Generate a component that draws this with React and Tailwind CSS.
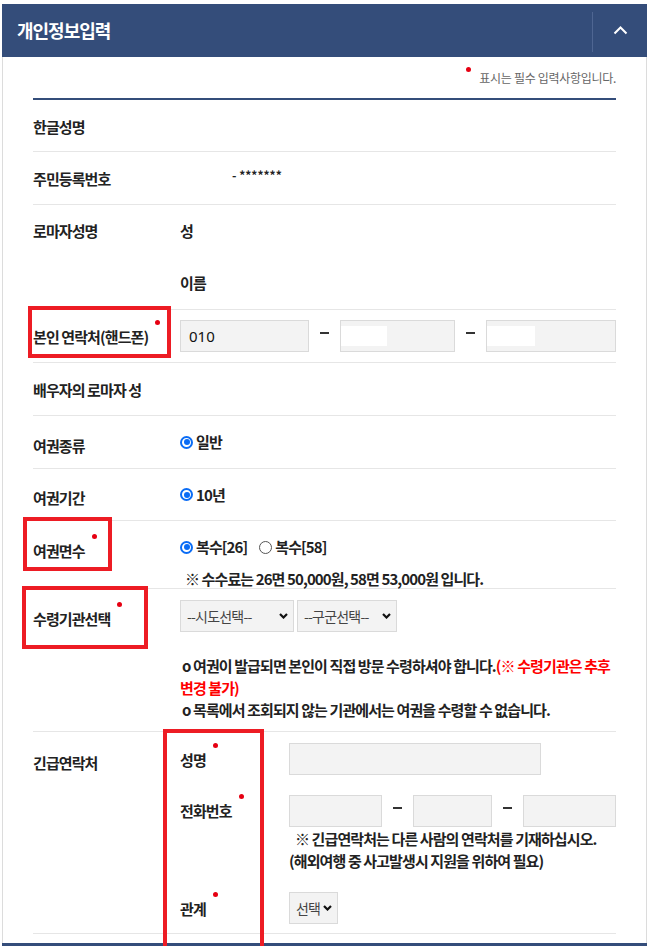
import React from 'react';

const Req = () => (
  <span className="absolute right-[-12px] top-[-7px] w-[5px] h-[5px] rounded-full bg-[#e60012]" />
);

const Label = ({ children, req }) => (
  <span className="relative inline-block text-[15px] leading-[20px] font-bold tracking-[-0.9px] text-[#222] whitespace-nowrap">
    {children}
    {req && <Req />}
  </span>
);

const Radio = ({ checked }) =>
  checked ? (
    <span className="w-[13px] h-[13px] rounded-full border-[2px] border-[#0a6cf5] bg-white flex items-center justify-center shrink-0">
      <span className="w-[6px] h-[6px] rounded-full bg-[#0a6cf5]" />
    </span>
  ) : (
    <span className="w-[13px] h-[13px] rounded-full border border-[#555] bg-white shrink-0" />
  );

const Chevron = () => (
  <svg width="9" height="6" viewBox="0 0 9 6" className="absolute right-[6px] top-[13px] pointer-events-none">
    <polyline points="1,1 4.5,4.5 8,1" fill="none" stroke="#111" strokeWidth="2.2" />
  </svg>
);

const Select = ({ className, text }) => (
  <div className={`relative h-[32px] ${className}`}>
    <select className="appearance-none w-full h-full bg-[#f3f3f3] border border-[#dadada] pl-[6px] text-[14px] tracking-[-0.8px] text-[#444] outline-none">
      <option>{text}</option>
    </select>
    <Chevron />
  </div>
);

const Input = ({ className, children }) => (
  <div className={`h-[32px] bg-[#f3f3f3] border border-[#dadada] flex items-center ${className}`}>
    {children}
  </div>
);

const Dash = () => (
  <span className="w-[31px] flex justify-center">
    <span className="w-[9px] h-[2px] bg-[#333] -translate-y-[3px]" />
  </span>
);

const Row = ({ className, children }) => (
  <div className={`flex border-b border-[#e6e6e6] ${className}`}>{children}</div>
);

export default function App() {
  return (
    <div className="relative w-[652px] h-[946px] overflow-hidden bg-white pl-[2px] pt-[4px] font-['Noto_Sans_CJK_KR','Noto_Sans',sans-serif] text-[#222]">
      {/* header */}
      <div className="w-[645px] h-[53px] bg-[#344d7a] flex items-center">
        <h2 className="flex-1 pl-[15px] text-white text-[18px] font-bold tracking-[-1px]">개인정보입력</h2>
        <div className="w-px h-[40px] bg-[#4f6692] mt-[3px]" />
        <button className="w-[54px] h-full flex items-center justify-center">
          <svg width="15" height="9" viewBox="0 0 15 9">
            <polyline points="1.5,7.5 7.5,1.5 13.5,7.5" fill="none" stroke="#fff" strokeWidth="2" />
          </svg>
        </button>
      </div>

      {/* body */}
      <div className="w-[645px] border-x border-[#dcdcdc] px-[30px] pb-[9px]">
        <div className="h-[41px] flex items-center justify-end">
          <span className="relative text-[12px] leading-[16px] tracking-[-0.3px] text-[#666]">
            <span className="absolute left-[-13px] top-[-3px] w-[5px] h-[5px] rounded-full bg-[#e60012]" />
            표시는 필수 입력사항입니다.
          </span>
        </div>
        <div className="h-[2px] bg-[#344d7a]" />

        <Row className="h-[52px] items-center">
          <div className="w-[147px] shrink-0"><Label>한글성명</Label></div>
        </Row>

        <Row className="h-[53px] items-center">
          <div className="w-[147px] shrink-0"><Label>주민등록번호</Label></div>
          <span className="ml-[52px] mb-[6px] text-[12px] font-bold text-[#222]">- *******</span>
        </Row>

        <Row className="h-[105px]">
          <div className="w-[147px] shrink-0 h-[52px] flex items-center"><Label>로마자성명</Label></div>
          <div className="flex-1 flex flex-col">
            <div className="h-[52px] flex items-center"><Label>성</Label></div>
            <div className="h-[52px] flex items-center"><Label>이름</Label></div>
          </div>
        </Row>

        <Row className="h-[53px] items-center">
          <div className="w-[147px] shrink-0"><Label req>본인 연락처(핸드폰)</Label></div>
          <div className="flex-1 flex items-center">
            <Input className="w-[129px] pl-[8px]">
              <span className="text-[15px] text-[#111] font-['Noto_Sans',sans-serif]">010</span>
            </Input>
            <Dash />
            <Input className="w-[115px]">
              <span className="w-[46px] h-[20px] bg-white" />
            </Input>
            <Dash />
            <Input className="flex-1">
              <span className="w-[48px] h-[20px] bg-white" />
            </Input>
          </div>
        </Row>

        <Row className="h-[53px] items-center">
          <div className="w-[147px] shrink-0"><Label>배우자의 로마자 성</Label></div>
        </Row>

        <Row className="h-[53px] items-center">
          <div className="w-[147px] shrink-0 pt-[5px]"><Label>여권종류</Label></div>
          <label className="flex items-center gap-[3px]">
            <Radio checked />
            <Label>일반</Label>
          </label>
        </Row>

        <Row className="h-[52px] items-center">
          <div className="w-[147px] shrink-0 pt-[5px]"><Label>여권기간</Label></div>
          <label className="flex items-center gap-[3px]">
            <Radio checked />
            <Label>10년</Label>
          </label>
        </Row>

        <Row className="h-[68px]">
          <div className="w-[147px] shrink-0 pt-[17px]"><Label req>여권면수</Label></div>
          <div className="flex-1 pt-[16px]">
            <div className="flex items-center h-[20px]">
              <label className="flex items-center gap-[3px]">
                <Radio checked />
                <Label>복수[26]</Label>
              </label>
              <label className="flex items-center gap-[3px] ml-[12px]">
                <Radio />
                <Label>복수[58]</Label>
              </label>
            </div>
            <p className="mt-[12px] pl-[5px] text-[15px] leading-[20px] font-bold tracking-[-0.9px]">
              ※ 수수료는 26면 50,000원, 58면 53,000원 입니다.
            </p>
          </div>
        </Row>

        <Row className="h-[143px]">
          <div className="w-[147px] shrink-0 pt-[17px]"><Label req>수령기관선택</Label></div>
          <div className="flex-1 pt-[11px]">
            <div className="flex gap-[3px]">
              <Select className="w-[114px]" text="--시도선택--" />
              <Select className="w-[100px]" text="--구군선택--" />
            </div>
            <div className="mt-[23px] pl-[2px] text-[15px] leading-[22px] font-bold tracking-[-0.9px] whitespace-nowrap">
              <p>
                o 여권이 발급되면 본인이 직접 방문 수령하셔야 합니다.
                <span className="text-[#ff0000]">(※ 수령기관은 추후</span>
              </p>
              <p className="-ml-[2px] text-[#ff0000]">변경 불가)</p>
              <p>o 목록에서 조회되지 않는 기관에서는 여권을 수령할 수 없습니다.</p>
            </div>
          </div>
        </Row>

        <Row className="h-[202px]">
          <div className="w-[147px] shrink-0 pt-[18px]"><Label>긴급연락처</Label></div>
          <div className="flex-1 pt-[11px]">
            <div className="flex items-center">
              <div className="w-[109px] shrink-0"><Label req>성명</Label></div>
              <Input className="w-[252px]" />
            </div>
            <div className="flex mt-[20px]">
              <div className="w-[109px] shrink-0 h-[32px] flex items-center"><Label req>전화번호</Label></div>
              <div className="flex-1">
                <div className="flex items-center">
                  <Input className="w-[93px]" />
                  <Dash />
                  <Input className="w-[79px]" />
                  <Dash />
                  <Input className="flex-1" />
                </div>
                <div className="mt-[1px] text-[15px] leading-[22px] font-bold tracking-[-0.9px] whitespace-nowrap">
                  <p className="pl-[6px]">※ 긴급연락처는 다른 사람의 연락처를 기재하십시오.</p>
                  <p>(해외여행 중 사고발생시 지원을 위하여 필요)</p>
                </div>
              </div>
            </div>
            <div className="flex items-center mt-[20px]">
              <div className="w-[109px] shrink-0"><Label req>관계</Label></div>
              <Select className="w-[49px]" text="선택" />
            </div>
          </div>
        </Row>
      </div>
      <div className="w-[645px] h-[53px] bg-[#344d7a]" />

      {/* annotation boxes */}
      <div className="absolute left-[28px] top-[306px] w-[143px] h-[52px] border-[4px] border-[#ed1c24]" />
      <div className="absolute left-[23px] top-[517px] w-[89px] h-[54px] border-[4px] border-[#ed1c24]" />
      <div className="absolute left-[22px] top-[586px] w-[126px] h-[63px] border-[4px] border-[#ed1c24]" />
      <div className="absolute left-[163px] top-[729px] w-[101px] h-[230px] border-[4px] border-[#ed1c24]" />
    </div>
  );
}
